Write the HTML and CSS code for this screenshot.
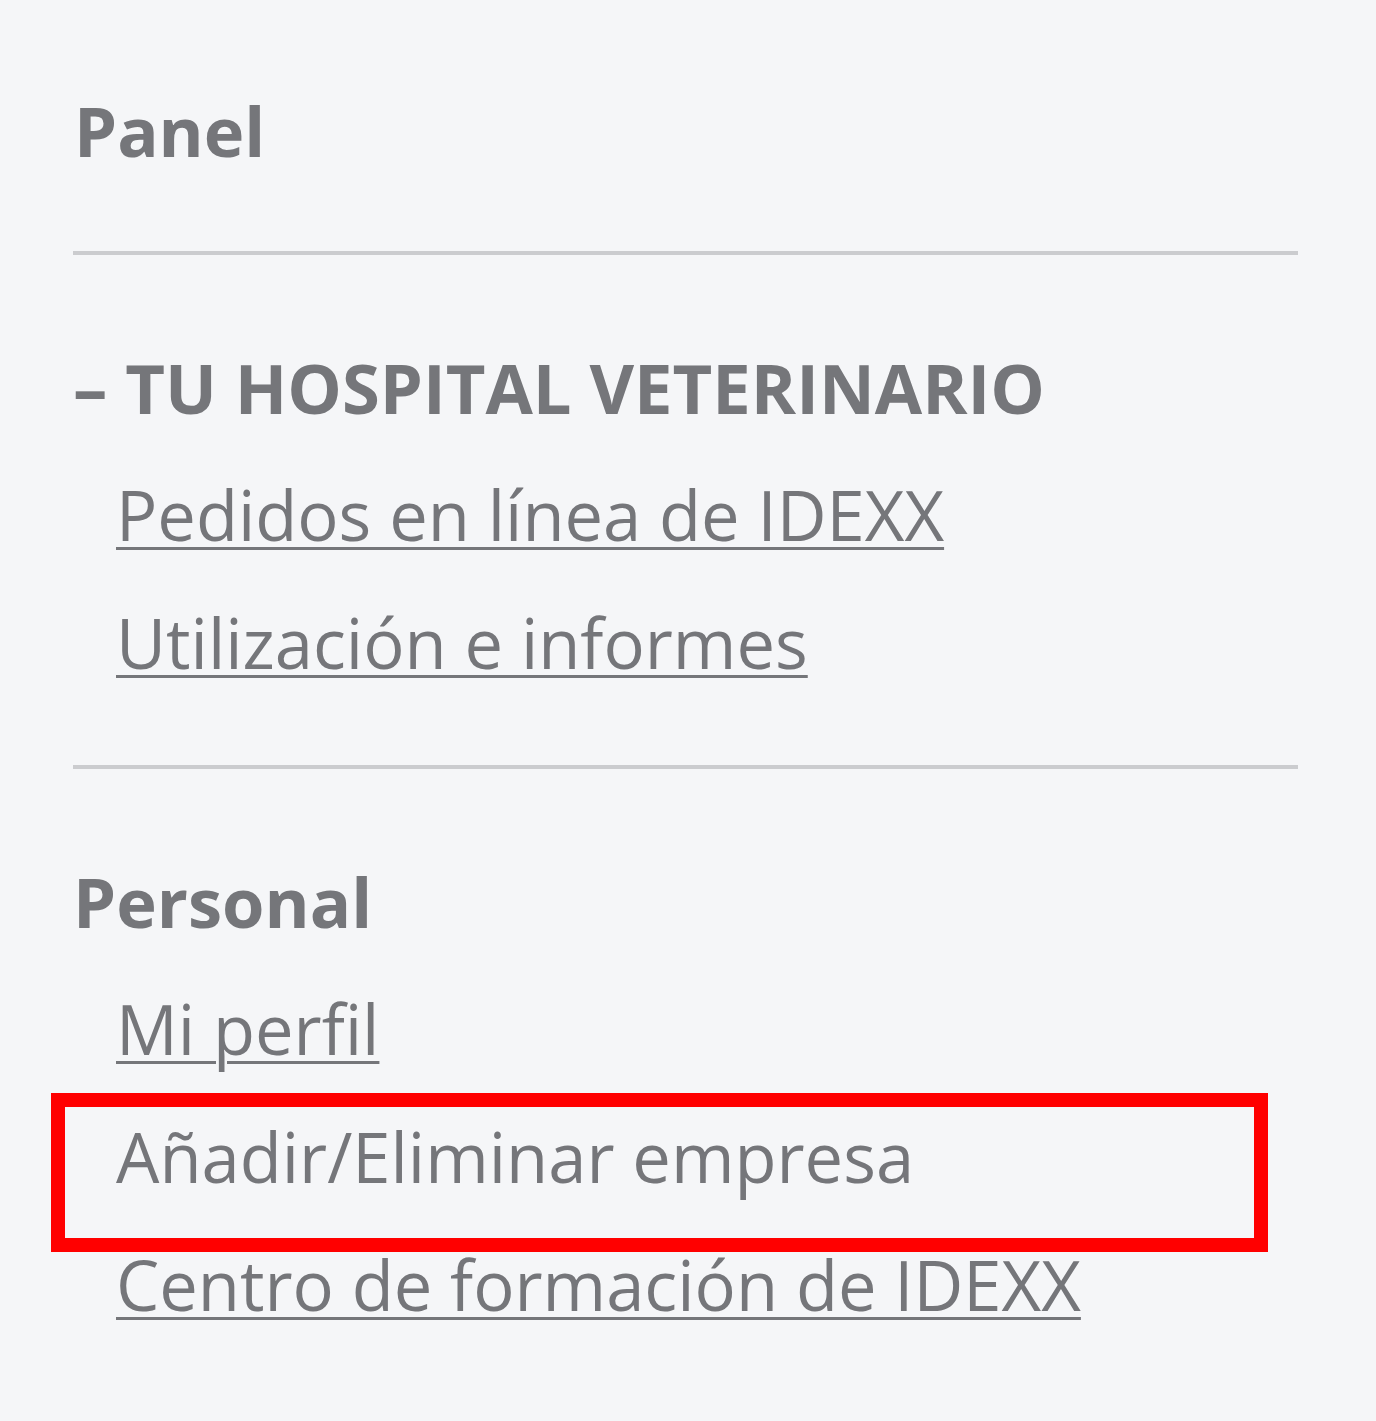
FILE: index.html
```html
<!DOCTYPE html>
<html lang="es">
<head>
    <meta charset="UTF-8">
    <meta name="viewport" content="width=device-width, initial-scale=1.0">
    <title>Panel | IDEXX</title>
    <link rel="stylesheet" href="styles.css">
</head>
<body>
    <nav class="sidebar">
        <h2 class="sidebar-title">Panel</h2>
        <hr class="divider">

        <section class="group">
            <h3 class="group-title">&ndash; TU HOSPITAL VETERINARIO</h3>
            <ul class="links">
                <li><a href="#">Pedidos en línea de IDEXX</a></li>
                <li><a href="#">Utilización e informes</a></li>
            </ul>
        </section>

        <hr class="divider">

        <section class="group">
            <h3 class="group-title">Personal</h3>
            <ul class="links">
                <li><a href="#">Mi perfil</a></li>
                <li class="highlight"><a href="#" class="current">Añadir/Eliminar empresa</a></li>
                <li><a href="#">Centro de formación de IDEXX</a></li>
            </ul>
        </section>
    </nav>
</body>
</html>
```

FILE: styles.css
```css
body {
    margin: 0;
    background: #f5f6f8;
    color: #75767a;
    font-family: "Open Sans", "Noto Sans", sans-serif;
}
.sidebar {
    width: 1225px;
    padding: 84px 0 0 73px;
}
.sidebar-title {
    font-size: 68.7px;
    font-weight: 700;
    line-height: normal;
    margin: 0 0 74px 1px;
}
.divider {
    border: none;
    height: 4px;
    background: #cbcccf;
    margin: 0;
}
.group {
    padding-top: 86px;
    margin-bottom: 58px;
}
.group-title {
    font-size: 68.7px;
    font-weight: 700;
    line-height: normal;
    margin: 0 0 17px 0;
}
.links {
    list-style: none;
    margin: 0;
    padding: 0 0 0 43px;
}
.links li {
    font-size: 68.7px;
    line-height: 128px;
}
.links a {
    color: #75767a;
    text-decoration: underline;
    text-decoration-thickness: 3px;
    text-underline-offset: 6px;
}
.links a.current {
    text-decoration: none;
}
.highlight {
    position: relative;
}
.highlight::after {
    content: "";
    position: absolute;
    top: 0;
    bottom: -31px;
    left: -65px;
    right: 30px;
    border: 14px solid #ff0000;
}
```
